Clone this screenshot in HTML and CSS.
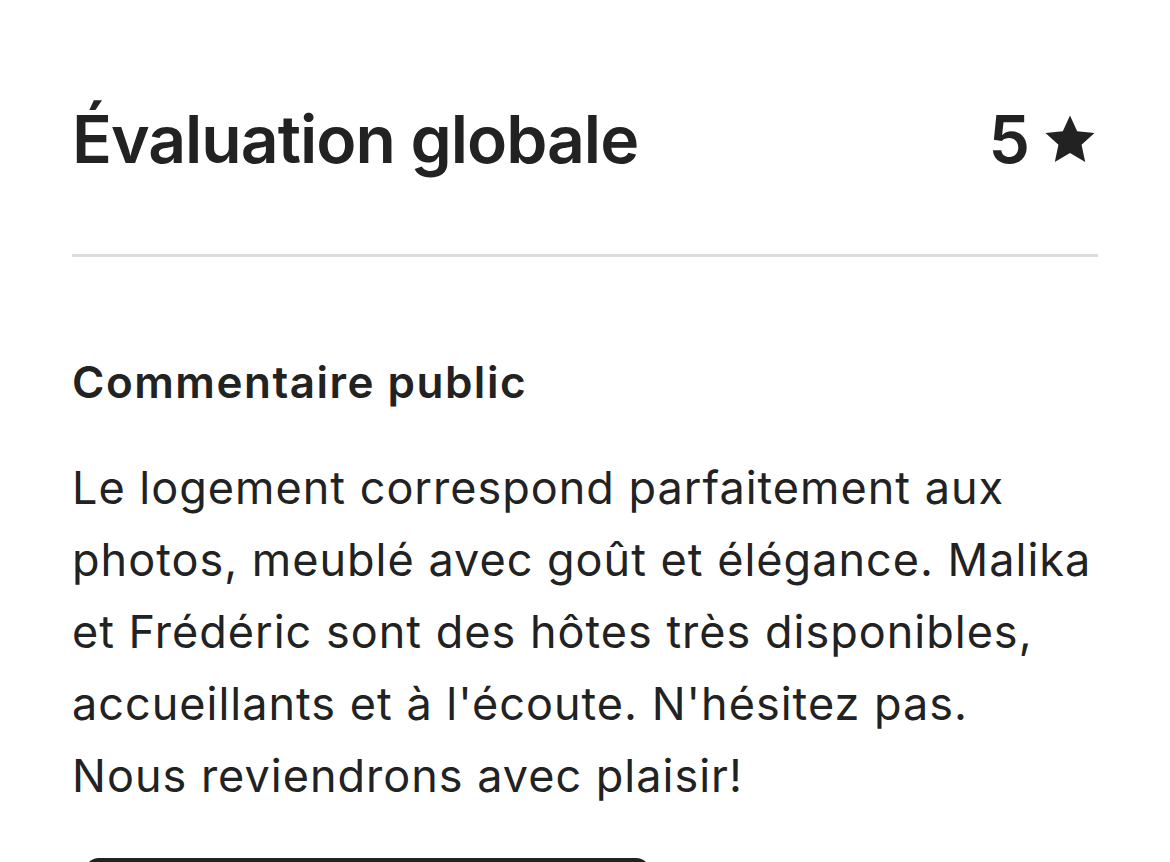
FILE: index.html
```html
<!DOCTYPE html>
<html lang="fr">
<head>
  <meta charset="UTF-8">
  <meta name="viewport" content="width=device-width, initial-scale=1.0">
  <title>Évaluation globale</title>
  <link rel="stylesheet" href="styles.css">
</head>
<body>
  <main class="review">
    <section class="overall">
      <h1>Évaluation globale</h1>
      <div class="score">
        <span>5</span>
        <svg class="star" viewBox="0 0 32 32" width="56" height="56" aria-hidden="true">
          <path d="M16 2.5l4.1 9.1 9.9 1-7.4 6.7 2.1 9.8L16 24l-8.7 5.1 2.1-9.8L2 12.6l9.9-1z"/>
        </svg>
      </div>
    </section>

    <section class="comment">
      <h2>Commentaire public</h2>
      <p>Le logement correspond parfaitement aux<br>
      photos, meublé avec goût et élégance. Malika<br>
      et Frédéric sont des hôtes très disponibles,<br>
      accueillants et à l'écoute. N'hésitez pas.<br>
      Nous reviendrons avec plaisir!</p>
    </section>

    <div class="actions">
      <button class="btn-main" aria-label="Traduire"></button>
    </div>
  </main>
</body>
</html>
```

FILE: styles.css
```css
body {
  margin: 0;
  background: #fff;
  color: #222222;
  font-family: Inter, "Noto Sans", sans-serif;
}
.review {
  padding: 0 72px;
}
.overall {
  display: flex;
  justify-content: space-between;
  align-items: center;
  padding: 99px 0 75px;
  border-bottom: 3px solid #dddddd;
}
.overall h1 {
  margin: 0;
  font-size: 66px;
  line-height: 80px;
  font-weight: 600;
  letter-spacing: -1px;
}
.score {
  display: flex;
  align-items: center;
  gap: 12px;
  font-size: 66px;
  line-height: 80px;
  font-weight: 600;
}
.star {
  fill: #222222;
}
.comment {
  padding-top: 98px;
}
.comment h2 {
  margin: 0 0 43px;
  font-size: 44px;
  line-height: 54px;
  font-weight: 600;
  letter-spacing: 1.5px;
}
.comment p {
  margin: 0;
  font-size: 45px;
  line-height: 72px;
  font-weight: 400;
  letter-spacing: 1px;
}
.actions {
  padding-top: 46px;
}
.btn-main {
  display: block;
  width: 565px;
  height: 100px;
  margin-left: 13px;
  border: none;
  border-radius: 14px;
  background: #222222;
}
```
